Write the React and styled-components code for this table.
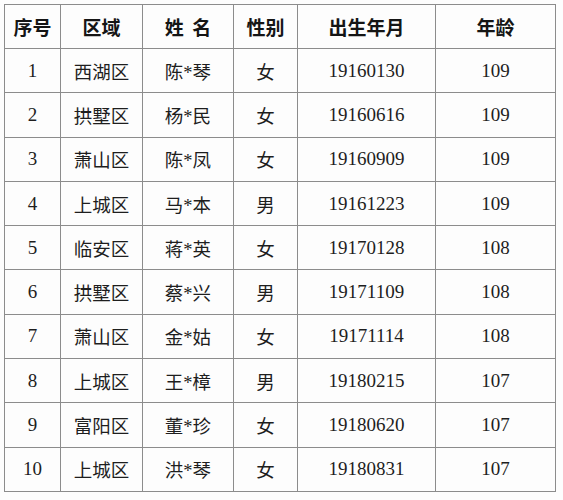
import styled, { createGlobalStyle } from "styled-components";

const GlobalStyle = createGlobalStyle`
  body {
    margin: 0;
    background: #fdfdfd;
  }
`;

const rows = [
  ["1", "西湖区", "陈*琴", "女", "19160130", "109"],
  ["2", "拱墅区", "杨*民", "女", "19160616", "109"],
  ["3", "萧山区", "陈*凤", "女", "19160909", "109"],
  ["4", "上城区", "马*本", "男", "19161223", "109"],
  ["5", "临安区", "蒋*英", "女", "19170128", "108"],
  ["6", "拱墅区", "蔡*兴", "男", "19171109", "108"],
  ["7", "萧山区", "金*姑", "女", "19171114", "108"],
  ["8", "上城区", "王*樟", "男", "19180215", "107"],
  ["9", "富阳区", "董*珍", "女", "19180620", "107"],
  ["10", "上城区", "洪*琴", "女", "19180831", "107"],
];

const widths = [56, 82, 91, 64, 138, 120];

const Page = styled.div`
  padding: 4px 0 0 4px;
  width: 563px;
  height: 500px;
  box-sizing: border-box;
`;

const Table = styled.table`
  border-collapse: collapse;
  table-layout: fixed;
  width: 551px;
  color: #1e1e1e;
`;

const HeadCell = styled.th`
  height: 43px;
  padding: 0;
  border: 1.5px solid #8c8c8c;
  text-align: center;
  font-family: "Noto Sans CJK SC", sans-serif;
  font-weight: 700;
  font-size: 19px;
  color: #151515;
`;

const Cell = styled.td`
  height: 43.3px;
  padding: 0;
  border: 1.5px solid #8c8c8c;
  text-align: center;
  font-family: "Liberation Serif", "Noto Sans CJK SC", serif;
  font-size: ${(p) => (p.$cjk ? "18.5px" : "19px")};
  font-weight: 400;
`;

const App = () => {
  return (
    <>
      <GlobalStyle />
      <Page>
        <Table>
          <colgroup>
            {widths.map((w, i) => (
              <col key={i} style={{ width: w }} />
            ))}
          </colgroup>
          <thead>
            <tr>
              <HeadCell>序号</HeadCell>
              <HeadCell>区域</HeadCell>
              <HeadCell>姓&nbsp;&nbsp;名</HeadCell>
              <HeadCell>性别</HeadCell>
              <HeadCell>出生年月</HeadCell>
              <HeadCell>年龄</HeadCell>
            </tr>
          </thead>
          <tbody>
            {rows.map((r) => (
              <tr key={r[0]}>
                <Cell>{r[0]}</Cell>
                <Cell $cjk>{r[1]}</Cell>
                <Cell $cjk>{r[2]}</Cell>
                <Cell $cjk>{r[3]}</Cell>
                <Cell>{r[4]}</Cell>
                <Cell>{r[5]}</Cell>
              </tr>
            ))}
          </tbody>
        </Table>
      </Page>
    </>
  );
};

export default App;
